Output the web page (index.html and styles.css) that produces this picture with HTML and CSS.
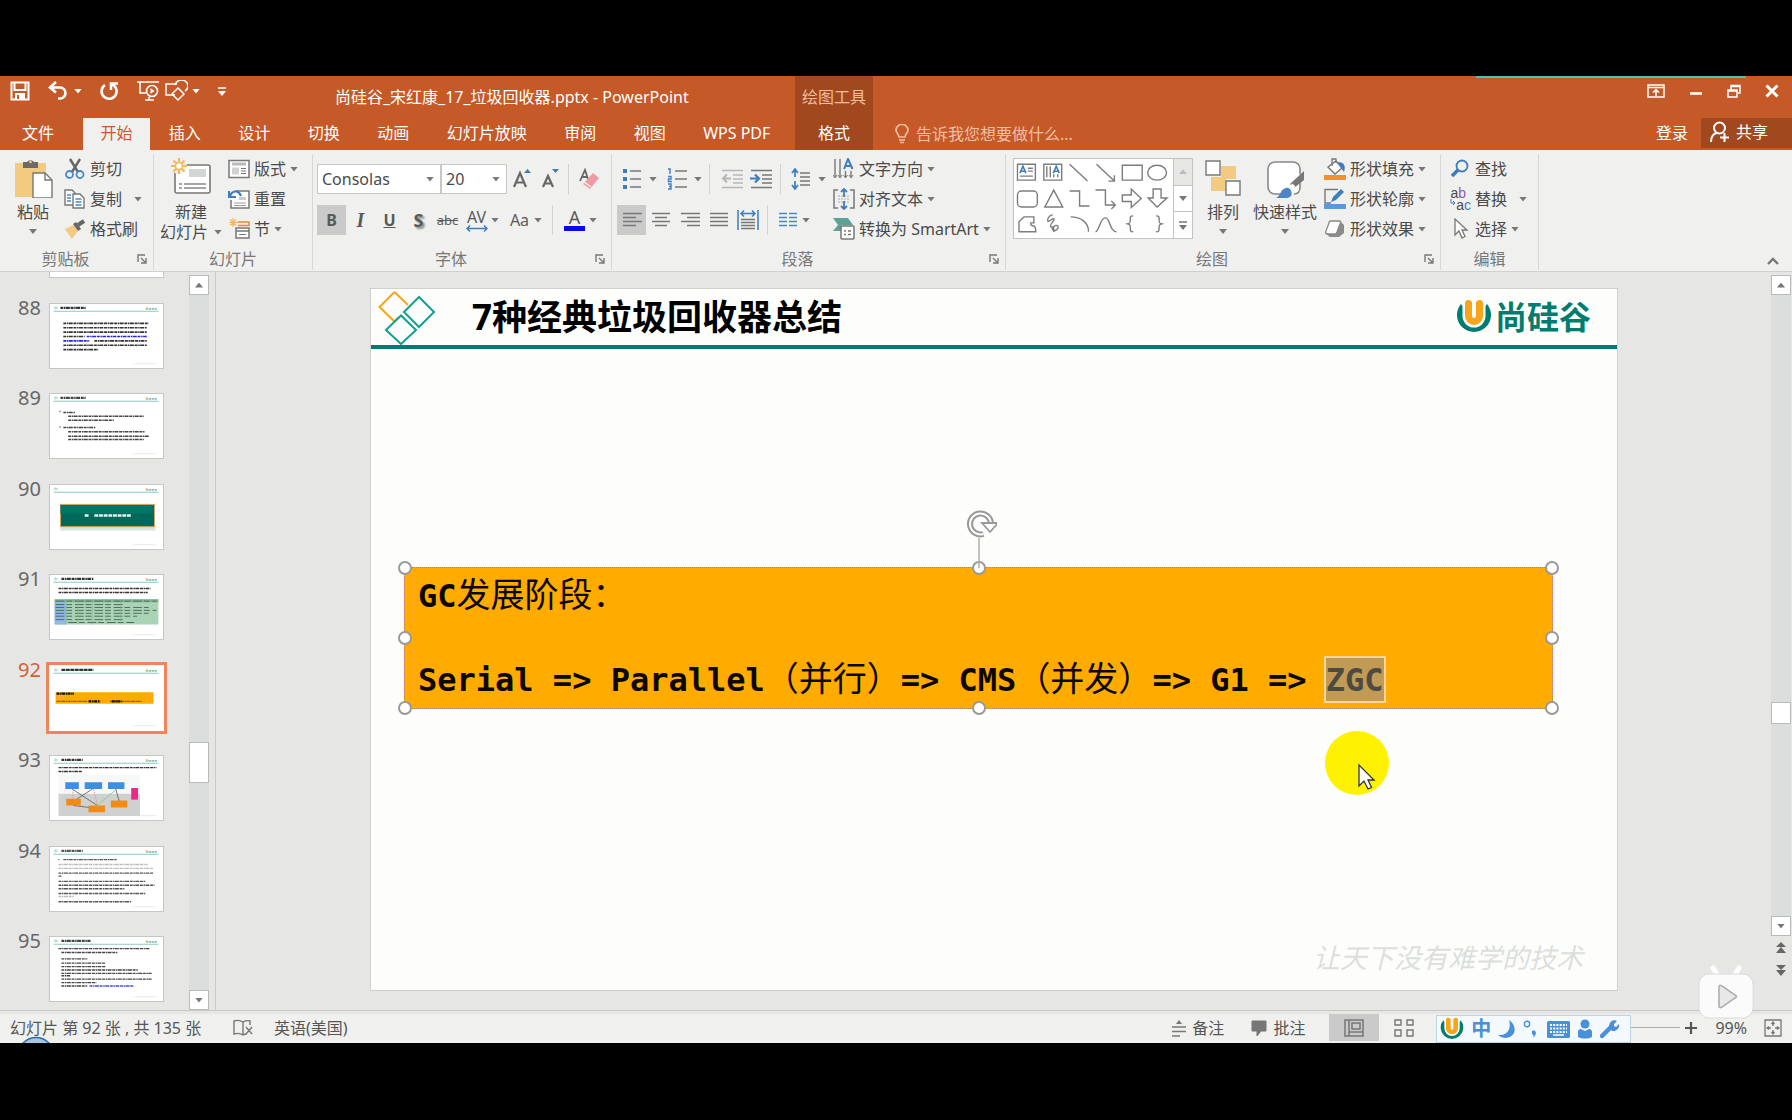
FILE: index.html
```html
<!DOCTYPE html>
<html lang="zh-CN">
<head>
<meta charset="utf-8">
<title>尚硅谷_宋红康_17_垃圾回收器.pptx - PowerPoint</title>
<link rel="stylesheet" href="styles.css">
</head>
<body>
<svg class="defs" aria-hidden="true">
  <symbol id="launcher" viewBox="0 0 10 10"><path d="M1 8V1h7M4 4l4 4M9 4v5H4" fill="none" stroke="#777" stroke-width="1.4"/></symbol>
  <symbol id="thumb-head" viewBox="0 0 115 66">
    <path d="M3 4l2-2 3 2-3 2z" fill="#b5dfd8"/>
    <path d="M3 7.500h108" stroke="#8cc9c1" stroke-width="1.200"/>
    <path d="M98 5h12" stroke="#8cc4ba" stroke-width="2" stroke-dasharray="2.500 .5"/>
    <path d="M98 4h2" stroke="#f2c978" stroke-width="2"/>
    <path d="M85 61.500h24" stroke="#e6e8e6" stroke-width="1.500" stroke-dasharray="2 .6"/>
  </symbol>
  <symbol id="u-logo" viewBox="0 0 36 36">
    <path d="M5 5A17 17 0 1 0 31 5L28 9H8z" fill="#007d6e"/>
    <path d="M9 3l2-2h2.500L16 3v14a2 2 0 0 0 4 0V3l2.500-2H25l2 2v14a9 9 0 0 1-18 0z" fill="#f9a51a" stroke="#fff" stroke-width="5" paint-order="stroke"/>
  </symbol>
</svg>
<div class="app">
  <header class="top">
    <div class="title-row">
      <div class="qat">
        <button aria-label="保存"><svg width="20" height="20" viewBox="0 0 20 20"><path d="M1.500 1.500h17v17h-17zM4.500 2v7h11V2" fill="none" stroke="#fff" stroke-width="2"/><path d="M5 12h10v6H5z" fill="#fff"/><path d="M7 14h2v4H7z" fill="#c65928"/></svg></button>
        <button class="undo" aria-label="撤消"><svg width="20" height="20" viewBox="0 0 20 20"><path d="M8 1L2 6.500l6 5M3 6.500h9a5 5 0 0 1 0 11H10" fill="none" stroke="#fff" stroke-width="2.600"/></svg><i class="caret light"></i></button>
        <button class="redo" aria-label="重复"><svg width="20" height="20" viewBox="0 0 20 20"><path d="M12 3a7.500 7.500 0 1 1-6 1M12 9V2.500h7" fill="none" stroke="#fff" stroke-width="2.600"/></svg></button>
        <button aria-label="从头开始"><svg width="22" height="22" viewBox="0 0 22 22" fill="none" stroke="#fff" stroke-width="1.600"><path d="M0 2h22M3 2v11h6M8 20h9M12 17v3"/><circle cx="15" cy="11" r="5.500"/><path d="M13.500 8v6l4-3z" fill="#fff" stroke="none"/></svg></button>
        <button aria-label="形状"><svg width="23" height="22" viewBox="0 0 23 22" fill="none" stroke="#fff" stroke-width="1.500"><path d="M10 15H1V4h11"/><path d="M10 5a6.500 6 0 1 1 10 6"/><path d="M13 8l6 6-6 6-6-6z"/></svg><i class="caret light"></i></button>
        <button class="custom" aria-label="自定义快速访问工具栏"><svg width="8" height="9" viewBox="0 0 8 9"><path d="M0 1h8" stroke="#fff" stroke-width="1.500"/><path d="M0 4h8L4 9z" fill="#fff"/></svg></button>
      </div>
      <h1 class="doc-title">尚硅谷_宋红康_17_垃圾回收器.pptx - PowerPoint</h1>
      <div class="ctx-label">绘图工具</div>
      <div class="win">
        <button aria-label="功能区显示选项"><svg width="18" height="14" viewBox="0 0 18 14" fill="none" stroke="#fff" stroke-width="1.500"><path d="M1 1h16v12H1zM1 3.500h16M9 12V6M6 8.500L9 5.500l3 3"/></svg></button>
        <button aria-label="最小化"><svg width="14" height="14" viewBox="0 0 14 14"><path d="M1 9.500h12" stroke="#fff" stroke-width="2.600"/></svg></button>
        <button aria-label="还原"><svg width="14" height="14" viewBox="0 0 14 14" fill="none" stroke="#fff" stroke-width="1.500"><path d="M1 6h9v7H1zM1 7h9M4 5V1.500h9V9h-2M4 2.500h9"/></svg></button>
        <button aria-label="关闭"><svg width="14" height="14" viewBox="0 0 14 14"><path d="M1.500 1.500l11 11M12.500 1.500l-11 11" stroke="#fff" stroke-width="3"/></svg></button>
      </div>
      <span class="strip"></span>
    </div>
    <nav class="tab-row">
      <button class="file">文件</button>
      <div class="tabs">
        <button class="tab on">开始</button><button class="tab">插入</button><button class="tab">设计</button><button class="tab">切换</button><button class="tab">动画</button><button class="tab">幻灯片放映</button><button class="tab">审阅</button><button class="tab">视图</button><button class="tab">WPS PDF</button>
      </div>
      <button class="ctx-tab">格式</button>
      <label class="tell">
        <svg width="14" height="20" viewBox="0 0 14 20" fill="none" stroke="#f1bfa2" stroke-width="1.600"><path d="M4 13c0-3-3-4-3-7a6 5.500 0 0 1 12 0c0 3-3 4-3 7zM4 16h6M5 18.500h4"/></svg>
        <input type="text" aria-label="告诉我" placeholder="告诉我您想要做什么...">
      </label>
      <button class="login">登录</button>
      <button class="share"><svg width="20" height="22" viewBox="0 0 20 22" fill="none" stroke="#fff" stroke-width="2"><circle cx="9.500" cy="7" r="5.500"/><path d="M1 21c0-5 2-8 5.500-9M10 16.500h9M14.500 12v9"/></svg>共享</button>
    </nav>
  </header>

  <section class="ribbon" aria-label="功能区">
    <div class="group g-clip">
      <div class="body">
        <button class="big"><svg width="40" height="40" viewBox="0 0 40 40"><path d="M2 5h31v34H2z" fill="#f2cb80"/><path d="M10 8V4h4a4 3.500 0 0 1 7 0h4v6H10z" fill="#6a6a6a"/><circle cx="17.500" cy="4" r="1.300" fill="#f2cb80"/><path d="M20 15h12l7 7v18H20z" fill="#fff" stroke="#777" stroke-width="1.400"/><path d="M32 15v7h7" fill="none" stroke="#777" stroke-width="1.400"/></svg><span>粘贴</span><i class="caret"></i></button>
        <div class="col">
          <button class="sm"><svg width="22" height="22" viewBox="0 0 22 22" fill="none"><path d="M6 1l8 13M16 1L8 14" stroke="#666" stroke-width="2.400"/><circle cx="5.500" cy="16.500" r="3.500" stroke="#4a86c5" stroke-width="1.800"/><circle cx="16" cy="16.500" r="3.500" stroke="#4a86c5" stroke-width="1.800"/></svg>剪切</button>
          <button class="sm wide"><svg width="22" height="22" viewBox="0 0 22 22" fill="#fff" stroke="#777" stroke-width="1.400"><path d="M1 2h7l4 4v11H1z"/><path d="M9 6h7l4 4v10H9z"/><path d="M3 7h4M3 10h4M3 13h4M11.500 11h6M11.500 14h6M11.500 17h6" stroke="#4a86c5"/></svg>复制<i class="caret"></i></button>
          <button class="sm"><svg width="22" height="22" viewBox="0 0 22 22"><path d="M1 11l9-4 4 6-6 8z" fill="#f2cb80"/><path d="M9 6l3-2 5 7-3 2z" fill="#666"/><path d="M14 7l6-4" stroke="#666" stroke-width="4"/></svg>格式刷</button>
        </div>
      </div>
      <div class="foot"><span>剪贴板</span><button aria-label="剪贴板选项"><svg width="10" height="10"><use href="#launcher"/></svg></button></div>
    </div>

    <div class="group g-slides">
      <div class="body">
        <button class="big"><svg width="40" height="40" viewBox="0 0 40 40"><rect x="4" y="7" width="35" height="28" rx="2" fill="#fff" stroke="#777" stroke-width="1.600"/><path d="M18 11h17v8H18z" fill="#d4d6d5"/><path d="M8 26h3M13 26h22M8 30h3M13 30h22" stroke="#888" stroke-width="1.300"/><circle cx="8" cy="8" r="8" fill="#f0f1ef"/><path d="M8 0v16M0 8h16M2.500 2.500l11 11M13.500 2.500l-11 11" stroke="#f2b95c" stroke-width="2"/><circle cx="8" cy="8" r="3.500" fill="#fff" stroke="#f2b95c" stroke-width="1.600"/></svg><span>新建</span><span class="with-caret">幻灯片<i class="caret"></i></span></button>
        <div class="col">
          <button class="sm"><svg width="22" height="22" viewBox="0 0 22 22" fill="none" stroke="#777" stroke-width="1.500"><path d="M1 2.500h20v17H1z" fill="#fff"/><path d="M4 6h14" stroke="#bbb" stroke-width="3"/><path d="M4 9.500h7v7H4z" fill="#d0d2d1" stroke="none"/><path d="M13 10.500h5M13 13h5M13 15.500h5" stroke-width="1"/></svg>版式<i class="caret"></i></button>
          <button class="sm"><svg width="22" height="22" viewBox="0 0 22 22" fill="none"><path d="M8 3h13v17H3v-8" fill="#fff" stroke="#777" stroke-width="1.500"/><path d="M11 9h7v3h-7z" fill="#ccc"/><path d="M6 15h12M6 17.500h12" stroke="#999"/><path d="M1 3v6h7M2 8c2-5 8-7 11 0" stroke="#3d7cc0" stroke-width="2.200"/></svg>重置</button>
          <button class="sm"><svg width="22" height="22" viewBox="0 0 22 22" fill="none"><path d="M5 0v9M1 4.500h9M2 1.500l6 6M8 1.500l-6 6" stroke="#f2b95c" stroke-width="1.200"/><path d="M10 4h11v3.500H10" stroke="#e58a2d" stroke-width="1.500"/><path d="M8 10h13v10H8zM8 13h13" fill="#fff" stroke="#777" stroke-width="1.500"/><path d="M11 16.500h7" stroke="#777"/></svg>节<i class="caret"></i></button>
        </div>
      </div>
      <div class="foot"><span>幻灯片</span></div>
    </div>

    <div class="group g-font">
      <div class="body rows">
        <div class="row">
          <label class="combo c-font"><select aria-label="字体"><option>Consolas</option></select><i class="caret"></i></label>
          <label class="combo c-size"><select aria-label="字号"><option>20</option></select><i class="caret"></i></label>
          <button class="ic" aria-label="增大字号"><svg width="20" height="22" viewBox="0 0 20 22"><path d="M2 19L8 5l6 14M4.500 14.500h7" fill="none" stroke="#666" stroke-width="2.200"/><path d="M12 5l3.500-4L19 5z" fill="#3d7cc0"/></svg></button>
          <button class="ic" aria-label="减小字号"><svg width="20" height="22" viewBox="0 0 20 22"><path d="M2 19L7 8l5 11M4 15.500h6" fill="none" stroke="#666" stroke-width="2.200"/><path d="M11 1l3.500 4L18 1z" fill="#3d7cc0"/></svg></button>
          <i class="sep s3"></i>
          <button class="ic" aria-label="清除格式"><svg width="22" height="22" viewBox="0 0 22 22"><path d="M1 13L6 2l3 9M3 9h5" fill="none" stroke="#666" stroke-width="1.800"/><path d="M14 5l6 5-9 11-7-5z" fill="#f09aa4"/><path d="M5 14l7 5" stroke="#f0f1ef" stroke-width="1.500"/></svg></button>
        </div>
        <div class="row">
          <button class="ic on"><b>B</b></button>
          <button class="ic"><em>I</em></button>
          <button class="ic"><u>U</u></button>
          <button class="ic shadow"><b>S</b></button>
          <button class="ic strike"><s>abc</s></button>
          <button class="ic split" aria-label="字符间距"><span class="av">AV<svg width="22" height="7" viewBox="0 0 22 7"><path d="M1 3.500h20M4 .5l-3 3 3 3M18 .5l3 3-3 3" fill="none" stroke="#3d7cc0" stroke-width="1.500"/></svg></span><i class="caret"></i></button>
          <button class="ic split gap3"><span>Aa</span><i class="caret"></i></button>
          <i class="sep s7"></i>
          <button class="ic split" aria-label="字体颜色"><span class="fc">A</span><i class="caret"></i></button>
        </div>
      </div>
      <div class="foot"><span>字体</span><button aria-label="字体选项"><svg width="10" height="10"><use href="#launcher"/></svg></button></div>
    </div>

    <div class="group g-para">
      <div class="body">
        <div class="rows para-l">
          <div class="row">
            <button class="ic split" aria-label="项目符号"><span><svg width="20" height="22" viewBox="0 0 20 22"><path d="M8 3h11M8 11h11M8 19h11" stroke="#777" stroke-width="1.500"/><path d="M1 1h4v4H1zM1 9h4v4H1zM1 17h4v4H1z" fill="#3d7cc0"/></svg></span><i class="caret pad3"></i></button>
            <button class="ic split gap5" aria-label="编号"><span><svg width="20" height="22" viewBox="0 0 20 22"><path d="M8 3h12M8 11h12M8 19h12" stroke="#777" stroke-width="1.500"/><path d="M1 1h2v5M1 8.500h3V11H1.500v2.500H5M1 16h3v5H1M2 18.500h2" fill="none" stroke="#3d7cc0" stroke-width="1.400"/></svg></span><i class="caret pad3"></i></button>
            <i class="sep s7"></i>
            <button class="ic" aria-label="降低列表级别"><svg width="22" height="20" viewBox="0 0 22 20" fill="none" stroke="#b5b7b6" stroke-width="1.500"><path d="M1 1.500h21M12 6h10M12 10h10M12 14h10M1 18.500h21"/><path d="M10 9.500H2M6 5.500l-4 4 4 4" stroke-width="2"/></svg></button>
            <button class="ic" aria-label="提高列表级别"><svg width="22" height="20" viewBox="0 0 22 20" fill="none" stroke="#777" stroke-width="1.500"><path d="M1 1.500h21M12 6h10M12 10h10M12 14h10M1 18.500h21"/><path d="M0 9.500h9M5 5.500l4 4-4 4" stroke="#3d7cc0" stroke-width="2.200"/></svg></button>
            <i class="sep s5"></i>
            <button class="ic split" aria-label="行距"><span><svg width="20" height="22" viewBox="0 0 20 22" fill="none"><path d="M9 5h10M9 9h10M9 13h10M9 17h10" stroke="#777" stroke-width="1.500"/><path d="M4 2v7M1 5l3-4 3 4M4 13v7M1 17l3 4 3-4" stroke="#3d7cc0" stroke-width="1.700"/></svg></span><i class="caret pad3"></i></button>
          </div>
          <div class="row">
            <button class="ic on" aria-label="左对齐"><svg width="20" height="16" viewBox="0 0 20 16"><path d="M1 1.500h19M1 5.500h13M1 9.500h19M1 13.500h13" stroke="#777" stroke-width="1.500"/></svg></button>
            <button class="ic" aria-label="居中"><svg width="20" height="16" viewBox="0 0 20 16"><path d="M1 1.500h18M4 5.500h12M1 9.500h18M4 13.500h12" stroke="#777" stroke-width="1.500"/></svg></button>
            <button class="ic" aria-label="右对齐"><svg width="20" height="16" viewBox="0 0 20 16"><path d="M1 1.500h19M7 5.500h13M1 9.500h19M7 13.500h13" stroke="#777" stroke-width="1.500"/></svg></button>
            <button class="ic" aria-label="两端对齐"><svg width="20" height="16" viewBox="0 0 20 16"><path d="M1 1.500h18M1 5.500h18M1 9.500h18M1 13.500h18" stroke="#777" stroke-width="1.500"/></svg></button>
            <button class="ic" aria-label="分散对齐"><svg width="22" height="22" viewBox="0 0 22 22" fill="none"><path d="M1 1v20M21 1v20M4 4.500h14M7 1.500l-3 3 3 3M15 1.500l3 3-3 3" stroke="#3d7cc0" stroke-width="1.500"/><path d="M4 10.500h14M4 13.500h14M4 16.500h14M4 19.500h14" stroke="#777" stroke-width="1.500"/></svg></button>
            <i class="sep s5"></i>
            <button class="ic split" aria-label="分栏"><span><svg width="18" height="16" viewBox="0 0 18 16"><path d="M0 1.500h8M0 5.500h8M0 9.500h8M0 13.500h8M10 1.500h8M10 5.500h8M10 9.500h8M10 13.500h8" stroke="#4a86c5" stroke-width="1.500"/></svg></span><i class="caret"></i></button>
          </div>
        </div>
        <div class="col">
          <button class="sm"><svg width="22" height="22" viewBox="0 0 22 22" fill="none"><path d="M2 1v18M7 1v18M12.500 13v6M18 13v6" stroke="#777" stroke-width="1.400"/><path d="M0 17l2 3 2-3M5 17l2 3 2-3M10.500 17l2 3 2-3M16 17l2 3 2-3" stroke="#777"/><path d="M11 11l4-10 4.500 10M12.500 8h5" stroke="#3d7cc0" stroke-width="2"/></svg>文字方向<i class="caret"></i></button>
          <button class="sm"><svg width="22" height="22" viewBox="0 0 22 22" fill="none"><path d="M5 2H1v18h4M17 2h4v18h-4" stroke="#777" stroke-width="1.500"/><path d="M5 8h12M5 11h12M5 14h12" stroke="#aaa" stroke-dasharray="2 1"/><path d="M11 1v8M8 4l3-3 3 3M11 13v8M8 18l3 3 3-3" stroke="#3d7cc0" stroke-width="1.800"/></svg>对齐文本<i class="caret"></i></button>
          <button class="sm"><svg width="22" height="22" viewBox="0 0 22 22"><path d="M0 0h15l5 7H8v6H0l5-6z" fill="#5da394"/><rect x="8" y="8" width="13" height="13" rx="1" fill="#fff" stroke="#777" stroke-width="1.500"/><path d="M11 13h2M15 13h3M11 16.500h2M15 16.500h3" stroke="#777" stroke-width="1.400"/></svg>转换为 SmartArt<i class="caret"></i></button>
        </div>
      </div>
      <div class="foot"><span>段落</span><button aria-label="段落选项"><svg width="10" height="10"><use href="#launcher"/></svg></button></div>
    </div>

    <div class="group g-draw">
      <div class="body">
        <div class="gallery">
          <svg class="shapes" width="160" height="79" viewBox="0 0 160 79" fill="none" stroke="#7b7d7c" stroke-width="1.400">
            <path d="M3.500 5h18v16h-18zM14 9h5M14 12h5M6 17h13"/><path d="M6 14l3-7 3 7M7 12h4" stroke="#3d7cc0" stroke-width="1.600"/>
            <path d="M30 5h18v16H30zM33 7v11M36.500 7v11M40 15v3M44 15v3"/><path d="M39.500 14l3-7 3 7M40.500 12h4" stroke="#3d7cc0" stroke-width="1.600"/>
            <path d="M56 5l18 17M83 5l18 17M101 16v6h-6"/>
            <path d="M109 6h20v15h-20z"/><ellipse cx="144" cy="13.500" rx="9.500" ry="7.500"/>
            <rect x="3.500" y="32" width="20" height="16" rx="4"/><path d="M40 31l9 17H31z"/>
            <path d="M56 32h10v15h10M82 31h10v15h10M98 42l4 4-4 4"/>
            <path d="M109 36h9v-6l10 9.500-10 9v-6h-9zM140 30h8v9h6l-10 9-9-9h5z"/>
            <path d="M5 73V63l5-5h10v6h-3c-1 2 1 3 3 3 2 1 2 3 2 6z"/>
            <path d="M39 56c-3 0-6 4-5 6s4-3 6-2-5 6-3 8 5-3 7-1-3 7-5 4 2-4 1 2"/>
            <path d="M57 58c10 0 18 5 18 15M82 73c4-1 5-15 10-14 5 0 4 14 11 14M120 57c-4 0-3 2-3 5s0 2-3 3c3 1 3 1 3 4s0 4 3 4M143 57c4 0 3 2 3 5s0 2 3 3c-3 1-3 1-3 4s0 4-3 4"/>
          </svg>
          <div class="gscroll">
            <button class="off" aria-label="上一行"><i class="caret up faint"></i></button>
            <button aria-label="下一行"><i class="caret"></i></button>
            <button aria-label="其他形状"><svg width="8" height="9" viewBox="0 0 8 9"><path d="M0 1h8" stroke="#777" stroke-width="1.500"/><path d="M0 4h8L4 9z" fill="#777"/></svg></button>
          </div>
        </div>
        <button class="big arrange"><svg width="40" height="40" viewBox="0 0 40 40"><path d="M18 8h15v13H18zM8 19h15v14H8z" fill="#f2cb80"/><path d="M3 3h14v14H3zM23 23h14v14H23z" fill="#fff" stroke="#777" stroke-width="1.400"/></svg><span>排列</span><i class="caret"></i></button>
        <button class="big quick"><svg width="40" height="40" viewBox="0 0 40 40"><path d="M22 36H10a7 7 0 0 1-7-7V11a7 7 0 0 1 7-7h18a7 7 0 0 1 7 7v18c0 4-2 7-6 7" fill="#fff" stroke="#888" stroke-width="1.600" stroke-dasharray="86 3"/><path d="M39 13v9L29 30l-4-4z" fill="#777"/><path d="M26 27l3 3" stroke="#fff" stroke-width="4"/><path d="M11 40c5-2 4-9 10-10 4-1 7 4 5 8-3 3-9 3-15 2z" fill="#4a86c5"/></svg><span>快速样式</span><i class="caret"></i></button>
        <div class="col">
          <button class="sm"><svg width="22" height="22" viewBox="0 0 22 22"><path d="M4 9l8-6 6 7-7 6z" fill="#fff" stroke="#777" stroke-width="1.400"/><path d="M8 8V1h4v4" fill="none" stroke="#777" stroke-width="1.300"/><path d="M14 4c6 0 8 4 6 10l-3-4z" fill="#3d7cc0"/><path d="M0 17h22v5H0z" fill="#f58f28"/></svg>形状填充<i class="caret"></i></button>
          <button class="sm"><svg width="22" height="22" viewBox="0 0 22 22"><path d="M14 1.500H1V15h6" fill="none" stroke="#777" stroke-width="1.400"/><path d="M7 14l2-5 8-8 3 3-8 8z" fill="#3d7cc0"/><path d="M0 16h22v5H0z" fill="#5b9bd5"/></svg>形状轮廓<i class="caret"></i></button>
          <button class="sm"><svg width="22" height="22" viewBox="0 0 22 22"><path d="M6 3h10l4 4v8l-5 4H6l-5-4z" fill="#8b8b8b"/><path d="M7 3h8c2 0 2 1 1 3l-3 8c-1 2-1 2-3 2H4c-2 0-3-1-2-3l3-8c0-1 1-2 2-2z" fill="#fff" stroke="#888" stroke-width="1.300"/></svg>形状效果<i class="caret"></i></button>
        </div>
      </div>
      <div class="foot"><span>绘图</span><button aria-label="绘图选项"><svg width="10" height="10"><use href="#launcher"/></svg></button></div>
    </div>

    <div class="group g-edit">
      <div class="body">
        <div class="col">
          <button class="sm"><svg width="22" height="22" viewBox="0 0 22 22" fill="none" stroke="#3d7cc0"><circle cx="13" cy="8" r="5.500" stroke-width="1.800"/><path d="M9 12l-6 6" stroke-width="3.600"/></svg>查找</button>
          <button class="sm far"><span class="abac"><span>a<b>b</b></span><span><svg width="6" height="8" viewBox="0 0 6 8"><path d="M1 0v4h4M3 2l2 2-2 2" fill="none" stroke="#3d7cc0"/></svg>a<i>c</i></span></span>替换<i class="caret"></i></button>
          <button class="sm"><svg width="22" height="22" viewBox="0 0 22 22"><path d="M6 1v16l4-4 3 7 3-1.500-3-6.500h5z" fill="#fff" stroke="#777" stroke-width="1.300"/></svg>选择<i class="caret"></i></button>
        </div>
      </div>
      <div class="foot"><span>编辑</span></div>
    </div>
    <button class="collapse" aria-label="折叠功能区"><svg width="12" height="8" viewBox="0 0 12 8"><path d="M1 7l5-5 5 5" fill="none" stroke="#777" stroke-width="2.400"/></svg></button>
  </section>

  <div class="work">
    <aside class="panel">
      <ol class="thumbs">
        <li class="stub"><span></span><span class="thumb"></span></li>
        <li><span>88</span><svg class="thumb" viewBox="0 0 115 66"><use href="#thumb-head"/><g stroke="#333" stroke-width="1.700" stroke-dasharray="3 .7 1.500 .5 4 .8"><path d="M10 4h26" stroke-width="2.200"/><path d="M13 20h88M13 24.500h86M13 29h86M13 33.500h22M45 38h54M13 42.500h86M13 47h36"/><path d="M37 33.500h62M13 38h27" stroke="#2626e0"/></g></svg></li>
        <li><span>89</span><svg class="thumb" viewBox="0 0 115 66"><use href="#thumb-head"/><g stroke="#444" stroke-width="1.500" stroke-dasharray="3 .7 1.500 .5 4 .8"><path d="M10 4h26" stroke-width="2.200"/><path d="M9 18h1M13 19h12M18 23h78M18 27h47M9 34h1M13 34.500h33M18 39h79M18 43.500h83M18 47h78"/></g></svg></li>
        <li><span>90</span><svg class="thumb" viewBox="0 0 115 66"><use href="#thumb-head"/><path d="M10 42h98v5H10z" fill="#d9e6df"/><path d="M10 20h97v23H10z" fill="#00695c" stroke="#d9a45a"/><path d="M10 20.500h96v9H10z" fill="#007568"/><path d="M35 31.500h4M45 31.500h38" stroke="#e8f3f0" stroke-width="2.600" stroke-dasharray="4 .8"/></svg></li>
        <li><span>91</span><svg class="thumb" viewBox="0 0 115 66"><use href="#thumb-head"/><g stroke="#333" stroke-width="1.500" stroke-dasharray="3 .7 1.500 .5 4 .8"><path d="M11 4h33" stroke-width="2.200"/><path d="M8 14h95M8 18h92"/></g><path d="M4 25h107v26H4z" fill="#a8d3b4"/><path d="M4 25h107v3H4z" fill="#7fb592"/><path d="M4 28h12v23H4z" fill="#8db8e8"/><path d="M5 27h104M5 30.500h70M5 33.500h96M5 36.500h104M5 39.500h96M5 42.500h84M5 46h70M18 49h68" stroke="#4d6b58" stroke-dasharray="9 2 6 3"/><path d="M16 25v26M28 25v26M43 25v26M58 25v26M72 25v26" stroke="#86b795" stroke-width=".6"/></svg></li>
        <li class="cur"><span>92</span><svg class="thumb" viewBox="0 0 115 66"><use href="#thumb-head"/><path d="M11 4h33" stroke="#333" stroke-width="2.200" stroke-dasharray="4 .6"/><path d="M5 27h101v12H5z" fill="#ffab00"/><g stroke="#111" stroke-width="1.500" stroke-dasharray="3 .7 1.500 .5"><path d="M6 28.500h18" stroke-width="2.400"/><path d="M6 36.500h32M61 36.500h33" stroke="#8a5d10"/><path d="M39 36.500h12M63 36.500h10" stroke-width="2.400"/></g></svg></li>
        <li><span>93</span><svg class="thumb" viewBox="0 0 115 66"><use href="#thumb-head"/><g stroke="#333" stroke-width="1.500" stroke-dasharray="3 .7 1.500 .5 4 .8"><path d="M11 4h22" stroke-width="2.200"/><path d="M8 12h101M8 16h24"/></g><path d="M8 19h84v20H8z" fill="#f7f8f8"/><path d="M8 39h84v23H8z" fill="#cfd1d1"/><path d="M22 34l26 17M43 34L23 47M67 34l4 14M23 51l24 3" stroke="#555" stroke-width=".8"/><path d="M44 34l4 16M23 34v12" stroke="#e57f95" stroke-width=".7" stroke-dasharray="2 1"/><path d="M68 34L48 51" stroke="#79c98a" stroke-width=".8"/><path d="M15 27h14v7H15zM35 27h18v7H35zM59 27h17v7H59z" fill="#3f8fe0"/><path d="M16 44h15v7H16zM39 51h17v7H39zM62 46h17v7H62z" fill="#f28a14"/><path d="M83 33h7v12h-7z" fill="#f0268a"/></svg></li>
        <li><span>94</span><svg class="thumb" viewBox="0 0 115 66"><use href="#thumb-head"/><g stroke="#555" stroke-width="1.400" stroke-dasharray="3 .7 1.500 .5 4 .8"><path d="M11 4h22" stroke-width="2.200"/><path d="M8 13h1M13 13h55M8 27h98M8 30h3M8 35.500h90M8 39.500h99M8 43h68M8 48h90M8 56.500h75"/><path d="M8 18h92M8 22h98M8 51h16" stroke="#bbb"/></g></svg></li>
        <li><span>95</span><svg class="thumb" viewBox="0 0 115 66"><use href="#thumb-head"/><g stroke="#444" stroke-width="1.400" stroke-dasharray="3 .7 1.500 .5 4 .8"><path d="M11 4h30" stroke-width="2.200"/><path d="M8 12h94M11 16h58M11 22.500h27M11 27h45M11 30.500h46M11 34h79M11 37.500h93M11 40h9M11 43.500h93M11 47h36M11 50.500h27"/><path d="M40 50.500h46" stroke="#4a4ae0"/></g></svg></li>
      </ol>
      <div class="vbar">
        <button aria-label="向上滚动"><i class="caret up"></i></button><span class="a1"></span><span class="knob k1"></span><span class="a2"></span><button aria-label="向下滚动"><i class="caret"></i></button>
      </div>
    </aside>
    <main class="stage">
      <article class="slide">
        <header class="slide-head">
          <svg width="58" height="56" viewBox="0 0 58 56" fill="none" stroke-width="2"><path d="M16.500 3L1.500 18l15 14.500 4-4M30 16L16.500 3" stroke="#f9a51a"/><path d="M41 8L26 23l15 15 15-15z" stroke="#12a08f"/><path d="M23 26.500L8 41l15 14 15-14z" stroke="#12a08f"/></svg>
          <h2>7种经典垃圾回收器总结</h2>
          <div class="brand"><svg width="36" height="36"><use href="#u-logo"/></svg><span>尚硅谷</span></div>
        </header>
        <div class="box">
          <p>GC<span>发展阶段：</span></p>
          <p><br></p>
          <p>Serial =&gt; Parallel<span>（并行）</span>=&gt; CMS<span>（并发）</span>=&gt; G1 =&gt; <mark>ZGC</mark></p>
          <i class="h nw"></i><i class="h n"></i><i class="h ne"></i><i class="h w"></i><i class="h e"></i><i class="h sw"></i><i class="h s"></i><i class="h se"></i>
          <svg class="rot" width="36" height="60" viewBox="0 0 36 60" fill="none"><path d="M18 30v30" stroke="#aaa" stroke-width="1.400"/><path d="M22.500 26a10.500 10.500 0 1 1 7.500-10" stroke="#999" stroke-width="6"/><path d="M22.500 26a10.500 10.500 0 1 1 7.500-10" stroke="#fff" stroke-width="2"/><path d="M21 15h16l-8 9z" fill="#fff" stroke="#999" stroke-width="1.800"/></svg>
        </div>
        <p class="motto">让天下没有难学的技术</p>
        <svg class="pointer" width="64" height="64" viewBox="0 0 64 64"><circle cx="32" cy="32" r="32" fill="#fff200"/><path d="M34 34v21l5-5 4 8 3.500-1.500L43 49h6z" fill="#fff" stroke="#333" stroke-width="1.300"/></svg>
      </article>
    </main>
    <div class="vbar right">
      <button aria-label="上一张"><i class="caret up"></i></button><span class="b1"></span><span class="knob k2"></span><span class="b2"></span><button aria-label="下一张"><i class="caret"></i></button>
      <svg width="12" height="36" viewBox="0 0 12 36" fill="#666"><path d="M6 0l5 5H1zM6 5l5 6H1zM1 23h10l-5 5zM1 28h10l-5 6z"/></svg>
    </div>
    <svg class="tv" width="60" height="58" viewBox="0 0 60 58"><path d="M17 5l5 8M43 5l-5 8" stroke="#fff" stroke-width="5" stroke-linecap="round"/><rect x="3" y="11" width="54" height="44" rx="10" fill="#fbfbfb" stroke="#dadada"/><path d="M23 24c0-2 1-2 3-1l13 9c2 1 2 2 0 3L26 44c-2 1-3 1-3-1z" fill="#e8e8e8" stroke="#aaa" stroke-width="1.500"/></svg>
  </div>

  <footer class="status">
    <span class="count">幻灯片 第 92 张 , 共 135 张</span>
    <svg class="spell" width="20" height="18" viewBox="0 0 20 18" fill="none" stroke="#777" stroke-width="1.400"><path d="M10 3C7 1 4 1 1 2v13c3-1 6-1 9 1 1-1 2-1 4-1M10 3v13M10 3c2-1 4-2 7-1v4M13 8l6 7M19 8l-6 7"/></svg>
    <span class="lang">英语(美国)</span>
    <button class="notes"><svg width="14" height="18" viewBox="0 0 14 18"><path d="M4 5l3-4 3 4z" fill="#777"/><path d="M0 8h14M0 12.500h14M0 17h8" stroke="#777" stroke-width="1.500"/></svg>备注</button>
    <button class="cmts"><svg width="16" height="18" viewBox="0 0 16 18"><path d="M1 2h14v10h-5l-4 5v-5H1z" fill="#777" stroke="#777" stroke-linejoin="round"/></svg>批注</button>
    <button class="view on" aria-label="普通视图"><svg width="20" height="18" viewBox="0 0 20 18" fill="none" stroke="#777" stroke-width="1.500"><path d="M1 1h18v16H1zM5 1v16M8 4h8v6H8zM5 13h14"/></svg></button>
    <button class="view" aria-label="幻灯片浏览"><svg width="20" height="18" viewBox="0 0 20 18" fill="none" stroke="#777" stroke-width="1.400"><path d="M1 1h6v5H1zM13 1h6v5h-6zM1 11h6v6H1zM13 11h6v6h-6z"/></svg></button>
    <span class="slider"><span class="line"></span></span>
    <button class="plus" aria-label="放大"><svg width="12" height="12" viewBox="0 0 12 12"><path d="M0 6h12M6 0v12" stroke="#555" stroke-width="2.200"/></svg></button>
    <span class="pct">99%</span>
    <button class="fit" aria-label="适应窗口"><svg width="18" height="18" viewBox="0 0 18 18" fill="none" stroke="#777" stroke-width="1.300"><path d="M1 1h16v16H1zM9 3v4M9 11v4M3 9h4M11 9h4M7.500 5L9 3l1.500 2M7.500 13L9 15l1.500-2M5 7.500L3 9l2 1.500M13 7.500L15 9l-2 1.500"/></svg></button>
    <div class="ime">
      <svg width="24" height="24"><use href="#u-logo"/></svg>
      <span>中</span>
      <svg width="18" height="20" viewBox="0 0 18 20"><path d="M11 1c8 5 8 17-3 18-3 0-6-1-8-3 8 1 14-5 11-15z" fill="#4a90d9"/></svg>
      <svg width="16" height="20" viewBox="0 0 16 20"><circle cx="4" cy="5" r="2.700" fill="none" stroke="#4a90d9" stroke-width="1.400"/><path d="M9 12c4-2 6 3 1 7 1-2 1-3-1-4z" fill="#4a90d9"/></svg>
      <svg width="23" height="18" viewBox="0 0 23 18"><rect width="23" height="17" y="1" rx="1.500" fill="#4a90d9"/><path d="M3 5h17M3 8.500h17M3 12h17" stroke="#fff" stroke-width="2" stroke-dasharray="2 1.200"/><path d="M6 15h11" stroke="#fff" stroke-width="1.500"/></svg>
      <svg width="16" height="20" viewBox="0 0 16 20" fill="#4a90d9"><circle cx="8" cy="5" r="4.500"/><path d="M1 18v-5c0-3 3-3 3-3l4 2 4-2s3 0 3 3v5c-4 2-10 2-14 0z"/></svg>
      <svg width="20" height="20" viewBox="0 0 20 20"><path d="M2 17l9-9" stroke="#4a90d9" stroke-width="4.500" stroke-linecap="round"/><path d="M9 8c0-5 4-8 8-6l-3 3v2l2 1 3-3c1 4-3 8-7 7z" fill="#4a90d9"/></svg>
    </div>
    <svg class="orb" width="36" height="7" viewBox="0 0 36 7"><circle cx="18" cy="19" r="17.500" fill="#a9c6df" stroke="#2f6fa8" stroke-width="1.500"/></svg>
  </footer>
</div>
</body>
</html>
```
FILE: styles.css
```css
* { box-sizing: border-box; }
body {
  margin: 0;
  min-height: 100vh;
  padding: 76px 0 77px;
  display: flex;
  background: #000;
  color: #4a4a4a;
  font: 16px/20px "Noto Sans", "Noto Sans CJK SC", sans-serif;
}
button, input, select { font: inherit; color: inherit; border: 0; background: none; padding: 0; margin: 0; }
button { display: flex; align-items: center; white-space: nowrap; }
p, h1, h2, ol { margin: 0; padding: 0; }
svg { flex: none; display: block; }
.defs { position: absolute; width: 0; height: 0; }
.app { flex: 1; min-width: 0; display: flex; flex-direction: column; background: #e6e7e5; }

.caret { flex: none; width: 8px; height: 5px; background: #777; clip-path: polygon(0 0, 100% 0, 50% 100%); }
.caret.up { clip-path: polygon(50% 0, 100% 100%, 0 100%); }
.caret.light { background: #fff; }
.caret.faint { background: #bbb; }
.caret.pad3 { margin-left: 3px; }

/* title bar and tabs */
.top { background: #c65928; color: #fff; }
.title-row { display: flex; height: 42px; position: relative; }
.strip { position: absolute; top: 0; right: 46px; width: 270px; height: 2px; background: #5bbfa8; }
.qat { width: 335px; display: flex; align-items: center; padding: 0 0 12px 10px; }
.qat button { gap: 6px; }
.qat .undo { margin-left: 18px; }
.qat .redo { margin: 0 18px 0 17px; }
.qat button:nth-child(5) { margin-left: 6px; gap: 4px; }
.qat .custom { margin-left: 18px; }
.doc-title { width: 460px; font-size: 16px; font-weight: 400; line-height: 42px; white-space: nowrap; }
.ctx-label { width: 78px; background: #a1481f; color: #f1bfa2; line-height: 42px; text-align: center; }
.win { margin-left: auto; display: flex; gap: 24px; padding: 0 13px 12px 0; }
.tab-row { display: flex; height: 32px; }
.tab-row button { padding-bottom: 3px; }
.file { width: 83px; padding-left: 22px; }
.tabs { display: flex; width: 712px; padding-right: 6px; }
.tab { flex: 1 1 auto; justify-content: center; }
.tab.on { flex-grow: 0; width: 67px; background: #f0f1ef; color: #d0562a; }
.ctx-tab { width: 78px; background: #a1481f; justify-content: center; }
.tell { display: flex; align-items: center; gap: 7px; padding-left: 22px; flex: 1; }
.tell input { width: 200px; }
.tell input::placeholder { color: #f1bfa2; opacity: 1; }
.share { width: 91px; gap: 6px; padding-left: 9px; margin: 0 0 2px 13px; background: #a1481f; }

/* ribbon */
.ribbon { display: flex; height: 122px; padding-top: 4px; background: #f0f1ef; border-bottom: 1px solid #cfd1d0; }
.group { flex: none; display: flex; flex-direction: column; border-right: 1px solid #d6d8d7; margin-bottom: 1px; }
.g-clip { width: 154px; }
.g-slides { width: 159px; }
.g-font { width: 299px; }
.g-para { width: 394px; }
.g-draw { width: 435px; }
.g-edit { width: 98px; }
.body { display: flex; height: 90px; padding-left: 8px; }
.g-clip .body { padding-left: 12px; }
.g-slides .body { padding-left: 7px; }
.g-font .body { padding-left: 4px; }
.g-para .body { padding-left: 5px; }
.g-draw .body { padding-left: 7px; }
.foot { display: flex; align-items: center; height: 22px; margin-top: 4px; color: #777; }
.foot span { flex: 1; text-align: center; }
.foot button { margin: 0 6px; }
.big { flex-direction: column; align-items: center; padding-top: 4px; width: 42px; }
.big svg { margin-bottom: 4px; }
.big .caret { margin-top: 7px; }
.with-caret { display: flex; align-items: center; gap: 6px; }
.big .with-caret .caret { margin: 0; }
.g-clip .big { margin-right: 10px; }
.g-slides .big { width: 60px; margin-right: 7px; }
.arrange { margin-left: 9px; }
.quick { width: 64px; margin: 0 7px 0 9px; }
.col { display: flex; flex-direction: column; }
.sm { height: 30px; gap: 4px; }
.sm .caret { margin-left: 0; }
.sm.wide .caret, .sm.far .caret { margin-left: 8px; }
.rows { display: flex; flex-direction: column; gap: 11px; padding-top: 10px; }
.row { display: flex; height: 30px; align-items: stretch; }
.ic { width: 29px; justify-content: center; color: #5a5a5a; }
.ic.on, .view.on { background: #c9cac9; }
.ic em { font-family: "Liberation Serif", serif; font-size: 20px; font-weight: 700; }
.ic u { font-weight: 700; }
.ic.shadow b { text-shadow: 2px 2px 2px #888; font-size: 18px; }
.strike { font-size: 13px; }
.split { width: 40px; justify-content: flex-start; }
.split span { width: 29px; display: flex; justify-content: center; }
.gap3 { margin-left: 3px; }
.gap5 { margin-left: 5px; }
.split .av { flex-direction: column; align-items: center; line-height: 16px; }
.split .fc { width: 21px; margin: 0 4px; border-bottom: 5px solid #0808f0; line-height: 17px; font-size: 18px; }
.sep { width: 1px; background: #d0d2d1; }
.s3 { margin: 0 6px 0 3px; }
.s5 { margin: 0 5px; }
.s7 { margin: 0 7px; }
.combo { display: flex; align-items: center; background: #fff; border: 1px solid #c6c8c7; padding-right: 6px; }
.c-font { width: 124px; }
.c-size { width: 66px; }
.combo select { appearance: none; flex: 1; min-width: 0; padding-left: 4px; outline: 0; }
.para-l { width: 216px; }
.gallery { display: flex; width: 180px; height: 81px; margin-top: 4px; border: 1px solid #c2c4c3; background: #fff; }
.shapes { width: 159px; }
.gscroll { display: flex; flex-direction: column; flex: 1; border-left: 1px solid #c2c4c3; }
.gscroll button { flex: 1; justify-content: center; }
.gscroll button + button { border-top: 1px solid #c2c4c3; }
.gscroll .off { background: #e6e7e5; }
.abac { width: 22px; font: 14px/12px "Liberation Sans", sans-serif; }
.abac > span { display: flex; justify-content: flex-end; }
.abac > span:first-child { padding-right: 5px; }
.abac b { font-weight: 400; color: #8a5aa8; }
.abac i { font-style: normal; color: #3d7cc0; }
.collapse { margin: auto 13px 6px auto; }

/* work area */
.work { flex: 1; display: flex; position: relative; border-bottom: 1px solid #c6c8c7; }
.panel { display: flex; flex: none; width: 216px; border-right: 1px solid #c8cac9; }
.thumbs { flex: 1; display: flex; flex-direction: column; justify-content: space-between; list-style: none; padding: 0 0 8px 18px; }
.thumbs li { display: flex; gap: 8px; height: 66px; font-size: 20px; line-height: 10px; color: #666; }
.thumbs li > span:first-child { width: 23px; }
.thumb { width: 115px; height: 66px; background: #fff; border: 1px solid #c3c8c6; }
.thumbs .stub { height: 6px; }
.stub .thumb { height: 6px; border-top: 0; }
.thumbs .cur { color: #d0623a; }
.cur .thumb { border-color: #fff; outline: 3px solid #f0855c; }
.vbar { display: flex; flex-direction: column; align-items: center; width: 20px; margin: 3px 6px 0 0; background: #dcdedd; }
.vbar button, .knob { flex: none; width: 20px; height: 20px; justify-content: center; background: #fff; border: 1px solid #b9bbba; }
.vbar .k1 { height: 41px; }
.vbar .k2 { height: 22px; }
.a1 { flex: 448; }
.a2 { flex: 208; }
.b1 { flex: 408; }
.b2 { flex: 192; }
.vbar.right { margin-right: 1px; background: linear-gradient(#dcdedd 660px, #e6e7e5 660px); }
.right svg { margin: 6px 0 32px; }
.stage { flex: 1; min-width: 0; padding: 17px 154px 20px 155px; }
.slide { position: relative; aspect-ratio: 16 / 9; background: #fdfefc; outline: 1px solid #cfd1d0; }
.slide-head { display: flex; align-items: center; height: 60px; border-bottom: 4px solid #007d72; padding: 0 26px 0 7px; color: #000; }
.slide-head h2 { margin-left: 36px; font-size: 35px; line-height: 56px; font-weight: 700; }
.brand { display: flex; align-items: center; gap: 3px; margin-left: auto; color: #007d6e; font-size: 32px; line-height: 36px; font-weight: 700; }
.box { position: absolute; left: 33px; right: 64px; top: 278px; padding: 4px 13px 10px; background: #ffab00; border: 1px dotted #a58a58; color: #0c0800; font: 700 32px/42px "DejaVu Sans Mono", monospace; }
.box p { height: 42px; white-space: pre; }
.box p span { font: 400 34px/42px "Noto Sans CJK SC", sans-serif; }
.box mark { padding: 3px 0 2px; background: #c19a56; color: #4d4b41; outline: 2px solid #fbd79a; }
.h { position: absolute; width: 14px; height: 14px; margin: -7px; border: 2px solid #999; border-radius: 50%; background: #fff; }
.nw, .n, .ne { top: 0; }
.w, .e { top: 50%; }
.sw, .s, .se { top: 100%; }
.nw, .w, .sw { left: 0; }
.n, .s { left: 50%; }
.ne, .e, .se { left: 100%; }
.rot { position: absolute; bottom: 100%; left: 50%; margin-left: -18px; }
.motto { position: absolute; right: 34px; bottom: 14px; font-size: 27px; line-height: 36px; font-style: italic; color: #dcdfdc; }
.pointer { position: absolute; left: 954px; top: 442px; }
.tv { position: absolute; right: 36px; bottom: -11px; z-index: 1; }

/* status bar */
.status { position: relative; display: flex; align-items: center; height: 32px; padding: 0 10px 2px; background: #f0f1ef; border-top: 3px solid #e6e7e5; color: #555; }
.count { width: 223px; }
.lang { margin: 0 auto 0 21px; }
.status button { gap: 6px; height: 100%; }
.cmts { margin: 0 24px 0 27px; }
.status .view { width: 50px; justify-content: center; }
.slider { width: 251px; }
.line { display: block; height: 1px; margin-left: 10px; background: #aaa; }
.plus { margin: 0 18px 0 5px; }
.fit { margin-left: 17px; }
.ime { position: absolute; right: 161px; top: 1px; width: 195px; height: 28px; display: flex; align-items: center; justify-content: space-between; padding: 0 10px 0 3px; background: #f3f9fd; border: 1px solid #bcd3e4; color: #4a90d9; }
.ime span { font-size: 20px; font-weight: 700; }
.orb { position: absolute; left: 18px; bottom: 0; }
```
